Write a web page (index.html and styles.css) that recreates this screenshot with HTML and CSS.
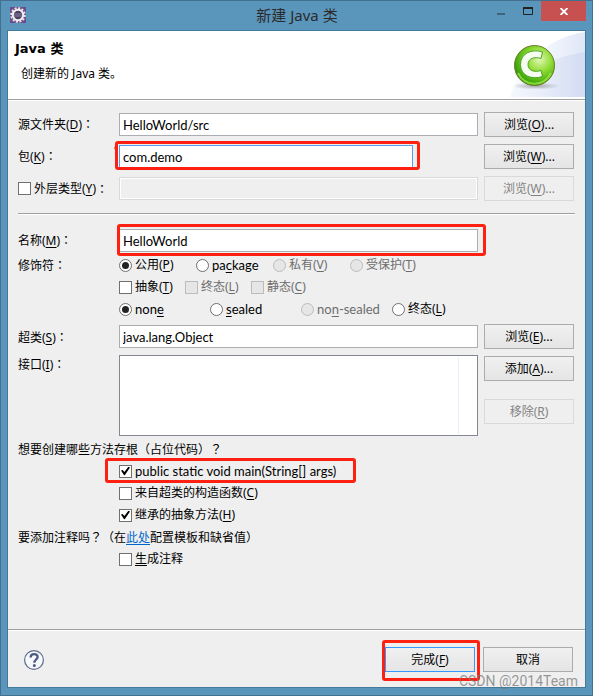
FILE: index.html
```html
<!DOCTYPE html>
<html lang="zh-CN">
<head>
<meta charset="utf-8">
<meta name="viewport" content="width=device-width, initial-scale=1">
<title>新建 Java 类</title>
<link rel="stylesheet" href="styles.css">
</head>

<body>
<div class="window">

<div class="titlebar">
  <svg class="app-icon" width="16" height="16" viewBox="0 0 16 16">
    <rect width="16" height="16" fill="#6a4c8c"/>
    <circle cx="8" cy="8" r="6.9" fill="none" stroke="#e6e4e2" stroke-width="1.8" stroke-dasharray="2.1 1.5"/>
    <circle cx="8" cy="8" r="5.2" fill="#4a3f63" stroke="#f2f0ee" stroke-width="2"/>
    <path d="M4 7h8M4 9h8" stroke="#8d84a8" stroke-width="1"/>
  </svg>
  <h1 class="title">新建 Java 类</h1>
  <div class="window-buttons">
    <button type="button" class="win-btn" aria-label="最小化"><svg width="8" height="10" viewBox="0 0 8 10"><path d="M0 8h8" stroke="#42637a" stroke-width="2"/></svg></button>
    <button type="button" class="win-btn" aria-label="最大化"><svg width="10" height="8" viewBox="0 0 10 8"><path d="M.5 1v6.5h9V1" fill="none" stroke="#222"/><path d="M0 1h10" stroke="#222" stroke-width="2"/></svg></button>
    <button type="button" class="win-btn win-close" aria-label="关闭"><svg width="8" height="7" viewBox="0 0 8 7"><path d="M.6 0l6.8 7M7.4 0L.6 7" stroke="#fff" stroke-width="1.8"/></svg></button>
  </div>
</div>

<form class="content">
  <div class="header">
    <div class="header-text">
      <h2>Java 类</h2>
      <p>创建新的 Java 类。</p>
    </div>
    <svg class="banner" width="75" height="66" viewBox="0 0 75 66">
      <defs>
        <linearGradient id="sky" x1="0" y1="0" x2="1" y2="0"><stop offset="0" stop-color="#fbfcff"/><stop offset=".5" stop-color="#f3f6fd"/><stop offset="1" stop-color="#dfe6f6"/></linearGradient>
        <linearGradient id="hill" x1="0" y1="0" x2="1" y2="0"><stop offset="0" stop-color="#f3f6fd"/><stop offset="1" stop-color="#ccd7f0"/></linearGradient>
        <radialGradient id="ball" cx=".62" cy=".35" r=".7"><stop offset="0" stop-color="#e2f7b4"/><stop offset=".45" stop-color="#8edb32"/><stop offset=".8" stop-color="#4aaf10"/><stop offset="1" stop-color="#2f8a08"/></radialGradient>
        <radialGradient id="shade"><stop offset="0" stop-color="#777" stop-opacity=".6"/><stop offset="1" stop-color="#777" stop-opacity="0"/></radialGradient>
      </defs>
      <path d="M0 66C6 36 38 6 75 1V66z" fill="url(#sky)"/>
      <path d="M0 66C10 42 40 26 75 21V66z" fill="url(#hill)" opacity=".7"/>
      <ellipse cx="26" cy="55" rx="24" ry="3.5" fill="url(#shade)"/>
      <circle cx="24.500" cy="34.500" r="20" fill="url(#ball)" stroke="#6b7a2b"/>
      <path d="M8 42a18 18 0 0 0 33 0" fill="none" stroke="#a5ef4a" stroke-width="2" opacity=".7"/>
      <path d="M32.500 21C22 17.500 10.500 22 10.500 33.500S22 49 32.500 45.500L31 39.500C25 41.500 18 40 18 33.500S25 25.500 31 27.500z" fill="#f6fdf0" stroke="#3d9a14" stroke-width=".9"/>
    </svg>
  </div>

  <div class="main">
    <div class="fields">
      <label for="source">源文件夹(<u>D</u>)<span class="mark">：</span></label>
      <input type="text" id="source" value="HelloWorld/src">
      <button type="button" class="btn">浏览(<u>O</u>)...</button>

      <label for="package">包(<u>K</u>)<span class="mark">：</span></label>
      <div class="package-field outlined"><input type="text" id="package" class="focused" value="com.demo"></div>
      <button type="button" class="btn">浏览(<u>W</u>)...</button>

      <label class="option"><input type="checkbox">外层类型(<u>Y</u>)<span class="mark">：</span></label>
      <input type="text" aria-label="外层类型" disabled>
      <button type="button" class="btn" disabled>浏览(<u>W</u>)...</button>
    </div>

    <hr>

    <div class="fields">
      <label for="name">名称(<u>M</u>)<span class="mark">：</span></label>
      <div class="name-field outlined"><input type="text" id="name" value="HelloWorld"></div>
    </div>

    <div class="modifiers">
      <span>修饰符<span class="mark">：</span></span>
      <div>
        <div class="options access">
          <label class="option"><input type="radio" name="access" checked>公用(<u>P</u>)</label>
          <label class="option latin"><input type="radio" name="access">pa<u>c</u>kage</label>
          <label class="option off"><input type="radio" name="access" disabled>私有(<u>V</u>)</label>
          <label class="option off"><input type="radio" name="access" disabled>受保护(<u>T</u>)</label>
        </div>
        <div class="options flags">
          <label class="option"><input type="checkbox">抽象(<u>T</u>)</label>
          <label class="option off"><input type="checkbox" disabled>终态(<u>L</u>)</label>
          <label class="option off"><input type="checkbox" disabled>静态(<u>C</u>)</label>
        </div>
        <div class="options sealing">
          <label class="option latin"><input type="radio" name="sealing" checked>non<u>e</u></label>
          <label class="option latin"><input type="radio" name="sealing"><u>s</u>ealed</label>
          <label class="option latin off"><input type="radio" name="sealing" disabled>no<u>n</u>-sealed</label>
          <label class="option"><input type="radio" name="sealing">终态(<u>L</u>)</label>
        </div>
      </div>
    </div>

    <div class="fields super-fields">
      <label for="super">超类(<u>S</u>)<span class="mark">：</span></label>
      <input type="text" id="super" value="java.lang.Object">
      <button type="button" class="btn">浏览(<u>E</u>)...</button>

      <label for="interfaces" class="top">接口(<u>I</u>)<span class="mark">：</span></label>
      <div class="list"><textarea id="interfaces"></textarea></div>
      <div class="list-buttons">
        <button type="button" class="btn">添加(<u>A</u>)...</button>
        <button type="button" class="btn" disabled>移除(<u>R</u>)</button>
      </div>
    </div>

    <div class="stubs">
      <p>想要创建哪些方法存根<span class="mark">（</span>占位代码<span class="mark">）？</span></p>
      <label class="option latin outlined main-stub"><input type="checkbox" checked>public static void main(String[] args)</label>
      <label class="option indent"><input type="checkbox">来自超类的构造函数(<u>C</u>)</label>
      <label class="option indent"><input type="checkbox" checked>继承的抽象方法(<u>H</u>)</label>
      <p>要添加注释吗<span class="mark">？（</span>在<a href="#">此处</a>配置模板和缺省值<span class="mark">）</span></p>
      <label class="option indent"><input type="checkbox"><u>生</u>成注释</label>
    </div>
  </div>

  <div class="footer">
    <button type="button" class="help" aria-label="帮助">
      <svg width="20" height="20" viewBox="0 0 20 20">
        <circle cx="10" cy="10" r="9.4" fill="#f7f8fa" stroke="#5c6d8d" stroke-width="1.2"/>
        <path d="M6.600 7.400C6.600 3 13.600 3 13.600 6.900C13.600 9.500 10.300 9.600 10.300 12.800" fill="none" stroke="#4c5b80" stroke-width="2.300"/>
        <circle cx="10.300" cy="15.600" r="1.500" fill="#4c5b80"/>
      </svg>
    </button>
    <div class="outlined finish"><button type="submit" class="btn default">完成(<u>F</u>)</button></div>
    <button type="button" class="btn">取消</button>
  </div>
</form>

<div class="watermark">CSDN @2014Team</div>
</div>
</body>
</html>
```
FILE: styles.css
```css
* {
    box-sizing: border-box;
}

body {
    margin: 0;
    color: #000;
    font: 12px/22px "Noto Sans", "Noto Sans CJK SC", sans-serif;
}

h1, h2, p {
    margin: 0;
}

input, textarea, button {
    margin: 0;
    border-radius: 0;
    color: inherit;
    font: inherit;
}

u {
    text-underline-offset: 2px;
}

.window {
    position: relative;
    display: flex;
    flex-direction: column;
    min-height: 100vh;
    padding: 0 7px 7px;
    border: 1px solid #44708f;
    background: #5a95bb;
}

/* title bar */

.titlebar {
    display: grid;
    grid-template-columns: 1fr auto 1fr;
    height: 29px;
    margin-right: -1px;
}

.app-icon {
    margin: 6px 2px;
}

.title {
    color: #2b2b2b;
    font-size: 15px;
    font-weight: normal;
    line-height: 28px;
}

.window-buttons {
    display: flex;
    justify-content: flex-end;
    height: 20px;
}

.win-btn {
    display: flex;
    align-items: center;
    justify-content: center;
    width: 27px;
    padding: 0;
    border: 0;
    background: none;
}

.win-close {
    width: 45px;
    background: #c75050;
}

/* dialog */

.content {
    display: flex;
    flex: 1;
    flex-direction: column;
    margin: 0 -1px;
    border: 1px solid #437a9b;
    background: #efefef;
}

.header {
    display: flex;
    justify-content: space-between;
    height: 69px;
    border-bottom: 1px solid #a0a0a0;
    background: #fff;
}

.header-text {
    padding: 6px 7px;
}

.header h2 {
    font-family: "DejaVu Sans", "Noto Sans CJK SC", sans-serif;
    font-size: 13px;
    line-height: 24px;
}

.header p {
    padding-left: 6px;
    line-height: 26px;
}

.main {
    flex: 1;
    padding: 11px 11px 0 10px;
    border-top: 1px solid #fff;
}

.fields {
    display: grid;
    grid-template-columns: 95px 1fr 90px;
    gap: 7px 6px;
    align-items: center;
}

/* full-width punctuation centred in its square */
.mark {
    font-family: "Noto Sans CJK TC", sans-serif;
    font-feature-settings: "locl" 0;
    text-spacing-trim: space-all;
}

input[type="text"] {
    display: block;
    width: 100%;
    height: 23px;
    padding: 0 3px;
    border: 1px solid #abadb3;
    background: #fff;
    font-family: Lato, "Noto Sans CJK SC", sans-serif;
    font-size: 13px;
    line-height: 21px;
}

.latin {
    font-family: Lato, "Noto Sans CJK SC", sans-serif;
    font-size: 13px;
}

input[type="text"]:disabled {
    border-color: #d9d9d9;
    background: #efefef;
    box-shadow: inset 0 0 0 1px #fff;
}

input.focused {
    border-color: #569de5;
}

hr {
    height: 2px;
    margin: 12px -1px 14px 0;
    border: 0;
    border-top: 1px solid #a0a0a0;
    background: #fff;
}

.btn {
    width: 90px;
    height: 25px;
    padding: 0;
    border: 1px solid #acacac;
    background: linear-gradient(#f0f0f0, #e5e5e5);
    line-height: 23px;
}

.btn:disabled {
    border-color: #d9d9d9;
    background: #efefef;
    color: #838383;
}

.btn.default {
    display: block;
    border-color: #3399ff;
}

/* red frames round the parts to fill in */

.outlined {
    position: relative;
}

.outlined::after {
    content: "";
    position: absolute;
    border: 3px solid #fe2010;
    border-radius: 3px;
    pointer-events: none;
}

.package-field {
    margin-right: 65px;
}

.package-field::after {
    inset: -4px -7px -2px -4px;
}

.package-field::before {
    content: "";
    position: absolute;
    top: 1px;
    left: -5px;
    width: 4px;
    height: 4px;
    border-radius: 2px;
    background: #c8801e;
}

.name-field::after {
    inset: -5px -8px -4px -2px;
}

.main-stub::after {
    inset: -2px -20px -1px -14px;
}

.finish::after {
    inset: -7px -5px -9px -3px;
}

/* options */

.modifiers {
    display: grid;
    grid-template-columns: 95px 1fr;
    column-gap: 6px;
    margin: 2px 0 4px;
}

.options {
    display: grid;
}

.access {
    grid-template-columns: repeat(4, 77px);
}

.flags {
    grid-template-columns: repeat(3, 66px);
}

.sealing {
    grid-template-columns: repeat(4, 91px);
}

.option {
    display: flex;
    align-items: center;
    height: 22px;
    white-space: nowrap;
}

.off {
    color: #6d6d6d;
}

input[type="checkbox"],
input[type="radio"] {
    appearance: none;
    flex: none;
    width: 13px;
    height: 13px;
    margin-right: 3px;
    border: 1px solid #707070;
    background: #fff;
}

input[type="radio"] {
    border-radius: 50%;
}

input[type="checkbox"]:disabled,
input[type="radio"]:disabled {
    border-color: #bcbcbc;
    background: #e6e6e6;
}

input[type="radio"]:checked::before {
    content: "";
    display: block;
    width: 7px;
    height: 7px;
    margin: 2px;
    border-radius: 50%;
    background: #222;
}

input[type="checkbox"]:checked::before {
    content: "";
    display: block;
    width: 9px;
    height: 9px;
    margin: 1px;
    background: #000;
    clip-path: polygon(0 44%, 18% 40%, 38% 62%, 82% 4%, 100% 10%, 42% 98%, 32% 94%);
}

/* interfaces */

.super-fields {
    row-gap: 6px;
}

.super-fields label {
    height: 22px;
}

.top {
    align-self: start;
    margin-top: -2px;
}

.list {
    position: relative;
}

.list::after {
    content: "";
    position: absolute;
    top: 2px;
    right: 19px;
    bottom: 2px;
    width: 1px;
    background: #e5f0fa;
}

.list textarea {
    display: block;
    width: 100%;
    height: 81px;
    border: 1px solid #828790;
    outline: 0;
    background: #fff;
    resize: none;
}

.list-buttons {
    display: grid;
    gap: 18px;
    align-self: start;
    padding-top: 1px;
}

.stubs {
    display: flex;
    flex-direction: column;
    align-items: flex-start;
    margin-top: 2px;
}

.stubs p {
    height: 22px;
}

.indent, .main-stub {
    margin-left: 101px;
}

a {
    color: #0066cc;
    text-underline-offset: 2px;
}

/* footer */

.footer {
    display: flex;
    align-items: center;
    gap: 8px;
    height: 58px;
    padding: 2px 12px 0 16px;
    border-top: 1px solid #a0a0a0;
    box-shadow: inset 0 1px #fff;
}

.help {
    height: 20px;
    margin-right: auto;
    padding: 0;
    border: 0;
    background: none;
}

.help svg {
    display: block;
}

.watermark {
    position: absolute;
    right: 14px;
    bottom: 3px;
    color: rgba(120, 120, 120, 0.75);
    font-family: Roboto, sans-serif;
    font-size: 14px;
    pointer-events: none;
}
```
